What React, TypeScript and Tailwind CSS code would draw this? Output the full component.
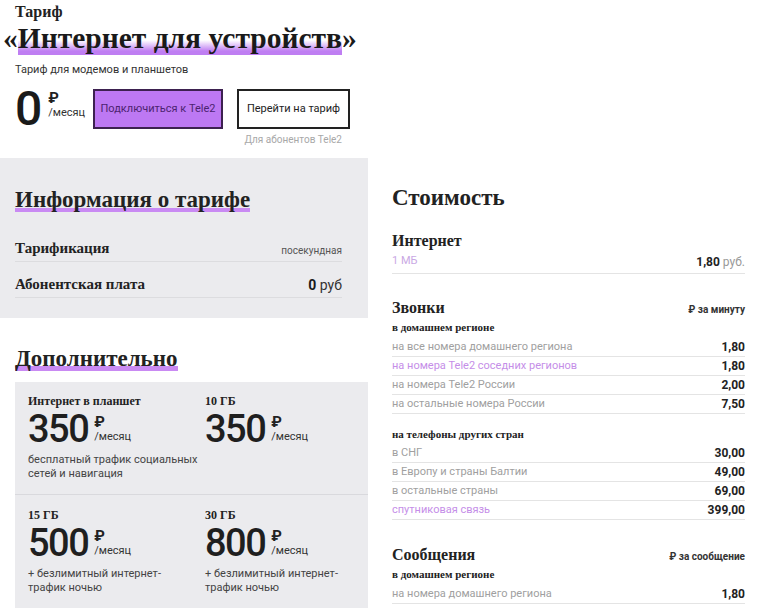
import React from 'react';

const serif = 'font-["Liberation_Serif",serif]';
const sans = 'font-["Roboto","Open_Sans",sans-serif]';

interface PriceRow {
  label: string;
  value: string;
  link?: boolean;
}

const homeCalls: PriceRow[] = [
  { label: 'на все номера домашнего региона', value: '1,80' },
  { label: 'на номера Tele2 соседних регионов', value: '1,80', link: true },
  { label: 'на номера Tele2 России', value: '2,00' },
  { label: 'на остальные номера России', value: '7,50' },
];

const foreignCalls: PriceRow[] = [
  { label: 'в СНГ', value: '30,00' },
  { label: 'в Европу и страны Балтии', value: '49,00' },
  { label: 'в остальные страны', value: '69,00' },
  { label: 'спутниковая связь', value: '399,00', link: true },
];

const Row: React.FC<PriceRow> = ({ label, value, link }) => (
  <div className="flex items-center justify-between h-[19px] border-b border-[#e4e4e4]">
    <span className={`${sans} text-[11px] ${link ? 'text-[#c58ee8]' : 'text-[#a0a0a0]'}`}>{label}</span>
    <span className={`${sans} text-[12px] font-bold text-[#222]`}>{value}</span>
  </div>
);

const Mark: React.FC<{ children: React.ReactNode }> = ({ children }) => (
  <span className="bg-linear-to-b from-transparent from-[82%] to-[#c98af3] to-[82%]">{children}</span>
);

interface OptionProps {
  title: string;
  price: string;
  desc?: string[];
}

const Option: React.FC<OptionProps> = ({ title, price, desc }) => (
  <div className="flex flex-col">
    <div className={`${serif} font-bold text-[12px] leading-[12px] text-[#222]`}>{title}</div>
    <div className="flex items-start h-[45px]">
      <span className={`${sans} font-medium text-[38px] leading-[45px] tracking-[-1.5px] text-[#1f1f1f]`}>{price}</span>
      <div className="flex flex-col ml-[6px] mt-[8px]">
        <span className={`${sans} font-bold text-[15px] leading-[15px] text-[#222]`}>₽</span>
        <span className={`${sans} text-[11px] leading-[13px] text-[#333]`}>/месяц</span>
      </div>
    </div>
    {desc && (
      <div className={`${sans} text-[11px] leading-[14px] text-[#444] mt-[1px]`}>
        {desc.map((d) => (
          <div key={d}>{d}</div>
        ))}
      </div>
    )}
  </div>
);

const App: React.FC = () => {
  return (
    <div className="w-[768px] h-[608px] overflow-hidden bg-white text-[#1f1f1f]">
      {/* header */}
      <header className="h-[158px] px-[15px] pt-[2px]">
        <div className={`${serif} font-bold text-[16px] leading-[20px] text-[#222]`}>Тариф</div>
        <h1 className={`${serif} font-bold text-[29.5px] leading-[32px] -ml-[12px] text-[#1a1a1a]`}>
          «<span className="bg-linear-to-b from-transparent from-[55%] to-[#bf7ef2] to-[55%] to-[88%] pb-[1px]">Интернет для устройств</span>»
        </h1>
        <p className={`${sans} text-[11px] leading-[14px] text-[#333] mt-[9px]`}>Тариф для модемов и планшетов</p>
        <div className="flex items-start mt-[12px]">
          <div className="flex items-start w-[78px]">
            <span className={`${sans} font-medium text-[48px] leading-[40px] text-[#1a1a1a]`}>0</span>
            <div className="flex flex-col ml-[6px] mt-[2px]">
              <span className={`${sans} font-bold text-[15px] leading-[15px]`}>₽</span>
              <span className={`${sans} text-[11px] leading-[13px] text-[#333]`}>/месяц</span>
            </div>
          </div>
          <div className="flex flex-col">
            <div className="flex gap-[14px]">
              <button className={`${sans} w-[130px] h-[40px] bg-[#bd78f3] border-2 border-[#3d2150] text-[11px] text-[#4c2370]`}>
                Подключиться к Tele2
              </button>
              <button className={`${sans} w-[113px] h-[40px] bg-white border-2 border-[#222] text-[11px] text-[#222]`}>
                Перейти на тариф
              </button>
            </div>
            <div className={`${sans} text-right text-[10px] leading-[14px] text-[#a8a8a8] mt-[4px] pr-[8px]`}>
              Для абонентов Tele2
            </div>
          </div>
        </div>
      </header>

      <div className="flex">
        {/* left column */}
        <div className="w-[368px] shrink-0">
          <section className="bg-[#ebebee] h-[160px] pl-[15px] pr-[26px] pt-[28px]">
            <h2 className={`${serif} font-bold text-[23px] leading-[28px] text-[#222]`}>
              <Mark>Информация о тарифе</Mark>
            </h2>
            <div className="mt-[23px] flex items-end justify-between h-[25px] border-b border-[#dcdcdf] pb-[4px]">
              <span className={`${serif} font-bold text-[15px] leading-[18px] text-[#222]`}>Тарификация</span>
              <span className={`${sans} text-[10px] leading-[12px] text-[#555]`}>посекундная</span>
            </div>
            <div className="mt-[10px] flex items-end justify-between h-[26px] border-b border-[#dcdcdf] pb-[4px]">
              <span className={`${serif} font-bold text-[15px] leading-[18px] text-[#222]`}>Абонентская плата</span>
              <span className={`${sans} text-[14px] leading-[16px] text-[#333]`}>
                <b className="text-[#1a1a1a]">0</b> руб
              </span>
            </div>
          </section>

          <section className="pl-[15px] pt-[27px]">
            <h2 className={`${serif} font-bold text-[23px] leading-[28px] text-[#222]`}>
              <Mark>Дополнительно</Mark>
            </h2>
            <div className="mt-[9px] bg-[#ebebee] h-[240px]">
              <div className="grid grid-cols-[177px_1fr] px-[13px] pt-[13px] h-[113px] border-b border-[#d9d9dd]">
                <Option title="Интернет в планшет" price="350" desc={['бесплатный трафик социальных', 'сетей и навигация']} />
                <Option title="10 ГБ" price="350" />
              </div>
              <div className="grid grid-cols-[177px_1fr] px-[13px] pt-[14px]">
                <Option title="15 ГБ" price="500" desc={['+ безлимитный интернет-', 'трафик ночью']} />
                <Option title="30 ГБ" price="800" desc={['+ безлимитный интернет-', 'трафик ночью']} />
              </div>
            </div>
          </section>
        </div>

        {/* right column */}
        <div className="flex-1 pl-[24px] pr-[23px] pt-[27px]">
          <h2 className={`${serif} font-bold text-[23px] leading-[26px] text-[#222]`}>Стоимость</h2>

          <h3 className={`${serif} font-bold text-[16px] leading-[18px] text-[#222] mt-[21px]`}>Интернет</h3>
          <div className="flex items-center justify-between h-[24px] border-b border-[#e4e4e4]">
            <span className={`${sans} text-[11px] text-[#c9a8e4]`}>1 МБ</span>
            <span className={`${sans} text-[12px] text-[#999]`}>
              <b className="text-[#222]">1,80</b> руб.
            </span>
          </div>

          <div className="flex items-end justify-between mt-[25px]">
            <h3 className={`${serif} font-bold text-[16px] leading-[18px] text-[#222]`}>Звонки</h3>
            <span className={`${sans} font-bold text-[10px] leading-[14px] text-[#333]`}>₽ за минуту</span>
          </div>
          <div className={`${serif} font-bold text-[11px] leading-[14px] text-[#222] mt-[3px] mb-[4px]`}>в домашнем регионе</div>
          {homeCalls.map((r) => (
            <Row key={r.label} {...r} />
          ))}
          <div className={`${serif} font-bold text-[11px] leading-[14px] text-[#222] mt-[13px] mb-[3px]`}>на телефоны других стран</div>
          {foreignCalls.map((r) => (
            <Row key={r.label} {...r} />
          ))}

          <div className="flex items-end justify-between mt-[26px]">
            <h3 className={`${serif} font-bold text-[16px] leading-[18px] text-[#222]`}>Сообщения</h3>
            <span className={`${sans} font-bold text-[10px] leading-[14px] text-[#333]`}>₽ за сообщение</span>
          </div>
          <div className={`${serif} font-bold text-[11px] leading-[14px] text-[#222] mt-[3px] mb-[4px]`}>в домашнем регионе</div>
          <Row label="на номера домашнего региона" value="1,80" />
        </div>
      </div>
    </div>
  );
};

export default App;
